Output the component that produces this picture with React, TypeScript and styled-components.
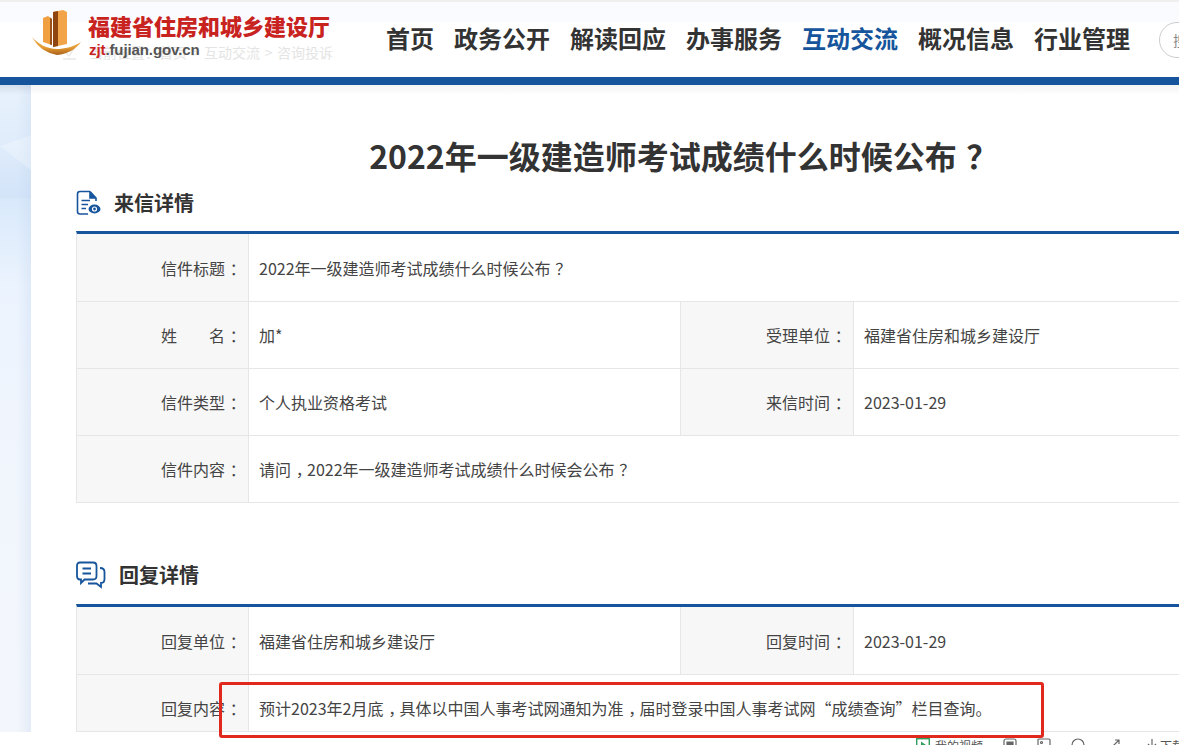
import React from "react";
import styled, { createGlobalStyle } from "styled-components";

const blue = "#16559c";

const GlobalStyle = createGlobalStyle`
  html, body {
    margin: 0;
    padding: 0;
    height: 745px;
    overflow: hidden;
    background: #fff;
    font-family: "Noto Sans CJK SC", "Liberation Sans", sans-serif;
    color: #444;
  }
`;

const Page = styled.div`
  position: relative;
  width: 1179px;
  height: 745px;
  overflow: hidden;
`;

const Header = styled.header`
  position: relative;
  display: flex;
  align-items: flex-start;
  height: 77px;
  box-sizing: border-box;
  padding: 8px 0 0 30px;
  background: linear-gradient(180deg, #fafbfe 0, #fafbfe 22px, #fff 23px);
  box-shadow: inset 0 2px 0 #efefef;
`;

const Logo = styled.div`
  position: relative;
  display: flex;
  gap: 6px;
  width: 356px;
  flex-shrink: 0;
`;

const LogoText = styled.div`
  display: flex;
  flex-direction: column;
  padding-top: 4px;
`;

const LogoName = styled.div`
  font-size: 22px;
  line-height: 26px;
  font-weight: 900;
  color: #c8231f;
  white-space: nowrap;
`;

const LogoUrl = styled.div`
  font-family: "Liberation Sans", sans-serif;
  font-size: 15px;
  line-height: 18px;
  font-weight: 700;
  letter-spacing: -0.1px;
  color: #555;
  white-space: nowrap;
  margin: 3px 0 0 1px;

  b {
    color: #c8231f;
  }
`;

const Nav = styled.nav`
  display: flex;
  gap: 20px;
  padding-top: 12px;
`;

const NavItem = styled.a<{ $active?: boolean }>`
  font-size: 24px;
  line-height: 36px;
  font-weight: 700;
  white-space: nowrap;
  color: ${(p) => (p.$active ? blue : "#333")};
`;

const SearchPill = styled.div`
  position: absolute;
  left: 1159px;
  top: 22px;
  width: 80px;
  height: 36px;
  box-sizing: border-box;
  padding-left: 13px;
  border: 1px solid #ccc;
  border-radius: 18px;
  font-size: 14px;
  line-height: 34px;
  color: #888;
  white-space: nowrap;
  background: #fff;
`;

const GhostCrumb = styled.div`
  position: absolute;
  left: 62px;
  top: 42px;
  display: flex;
  align-items: center;
  gap: 12px;
  font-size: 14px;
  line-height: 20px;
  word-spacing: 1.5px;
  color: #e4e4e4;
  white-space: nowrap;
`;

const BlueBar = styled.div`
  height: 8px;
  background: ${blue};
`;

const Body = styled.div`
  display: flex;
  height: 647px;
`;

const Side = styled.div`
  position: relative;
  width: 31px;
  flex-shrink: 0;
  background:
    linear-gradient(180deg, rgba(170, 185, 205, 0.35) 0, transparent 10px),
    linear-gradient(90deg, transparent 55%, rgba(190, 210, 235, 0.28) 100%),
    linear-gradient(
      180deg,
      #e9f2fd 0,
      #dfecfb 60px,
      #d3e4f9 112px,
      #d9e9fb 114px,
      #ebf3fe 200px,
      #f0f5fd 330px,
      #f3f6fc 646px
    );

  &::before {
    content: "";
    position: absolute;
    left: 0;
    top: 50px;
    width: 31px;
    height: 35px;
    background: rgba(255, 255, 255, 0.25);
    clip-path: polygon(0 32%, 100% 0, 100% 100%);
  }
`;

const Main = styled.main`
  flex-shrink: 0;
  width: 1251px;
  box-sizing: border-box;
  padding: 47px 0 0 45px;
  background: linear-gradient(180deg, #f4f4f4 0, #fff 10px);
`;

const Title = styled.h1`
  display: flex;
  justify-content: center;
  margin: 0;
  font-size: 32px;
  line-height: 46px;
  font-weight: 700;
  color: #333;
  white-space: nowrap;
`;

const Punc = styled.span`
  display: inline-block;
  margin-left: 0.3em;
  margin-right: -0.3em;
`;

const Section = styled.section<{ $gap: number }>`
  margin-top: ${(p) => p.$gap}px;
`;

const SectionHead = styled.div<{ $gap: number; $below: number }>`
  display: flex;
  align-items: center;
  gap: ${(p) => p.$gap}px;
  height: 30px;
  margin-bottom: ${(p) => p.$below}px;
`;

const SectionTitle = styled.h2`
  margin: 0;
  font-size: 20px;
  line-height: 30px;
  font-weight: 700;
  color: #333;
`;

const Grid = styled.div`
  display: grid;
  grid-template-columns: 172px 432px 173px 1fr;
  border-top: 3px solid ${blue};
  border-left: 1px solid #e6e6e6;
`;

const Label = styled.div<{ $h: number; $shift?: number }>`
  display: flex;
  align-items: center;
  justify-content: flex-end;
  height: ${(p) => p.$h}px;
  box-sizing: border-box;
  padding: ${(p) => p.$shift ?? 0}px 7px 0 0;
  background: #f7f7f7;
  border-right: 1px solid #e6e6e6;
  border-bottom: 1px solid #e6e6e6;
  font-size: 16px;
  color: #444;
  white-space: pre;
`;

const Value = styled.div<{ $h: number; $wide?: boolean; $shift?: number }>`
  display: flex;
  align-items: center;
  height: ${(p) => p.$h}px;
  box-sizing: border-box;
  padding: ${(p) => p.$shift ?? 0}px 0 0 10px;
  border-right: 1px solid #e6e6e6;
  border-bottom: 1px solid #e6e6e6;
  font-size: 16px;
  color: #444;
  white-space: pre;
  grid-column: ${(p) => (p.$wide ? "span 3" : "auto")};
`;

const Highlight = styled.div`
  position: absolute;
  left: 219px;
  top: 682px;
  width: 825px;
  height: 56px;
  box-sizing: border-box;
  border: 3px solid #e1281d;
  border-radius: 3px;
  pointer-events: none;
`;

const StatusBar = styled.footer`
  display: flex;
  align-items: flex-start;
  height: 13px;
  padding: 6px 0 0 916px;
  box-sizing: border-box;
  background: #fff;
  overflow: hidden;
`;

const StatusText = styled.span`
  font-size: 12px;
  line-height: 16px;
  color: #555;
  white-space: nowrap;
  margin-right: 20px;
`;

const StatusIcon = styled.svg<{ $gap?: number }>`
  flex-shrink: 0;
  width: 14px;
  height: 14px;
  margin-right: ${(p) => p.$gap ?? 20}px;
`;

const LogoMark = () => (
  <svg width="52" height="48" viewBox="0 0 52 48">
    <defs>
      <linearGradient id="boat" x1="0" y1="0" x2="0" y2="1">
        <stop offset="0" stopColor="#f0b050" />
        <stop offset="0.6" stopColor="#e49a32" />
        <stop offset="1" stopColor="#a8601c" />
      </linearGradient>
    </defs>
    <path d="M13 10 L18 8 L22 11 V37 L13 34Z" fill="#f0a040" />
    <path d="M20 9.5 L22 11 V37 L20 36.4Z" fill="#9c5216" />
    <path d="M23 4 L33 2 L37 4 V36 L23 39Z" fill="#f2a548" />
    <path d="M23 4 L28 3 V38 L23 39Z" fill="#8f4510" />
    <path d="M2 29 C8 40 17 45 27 47 C38 46 46 41 51 34 C43 39 34 41 27 41 C17 41 8 36 2 29Z" fill="url(#boat)" />
  </svg>
);

const LetterIcon = () => (
  <svg width="26" height="26" viewBox="0 0 26 26" fill="none" stroke={blue} strokeWidth="1.6">
    <path d="M14 1.5H4 Q1.5 1.5 1.5 4V21.5 Q1.5 24 4 24H12" />
    <path d="M14 1.5 L20 8 V11" />
    <path d="M14 2 V8 H20" fill={blue} />
    <path d="M5.5 10.5H14 M5.5 14.5H12 M5.5 18.5H10" />
    <ellipse cx="18.5" cy="19" rx="6" ry="4.4" fill={blue} stroke="none" />
    <circle cx="18.5" cy="19" r="2.6" fill="#fff" stroke="none" />
    <circle cx="18.5" cy="19" r="1.4" fill={blue} stroke="none" />
  </svg>
);

const ReplyIcon = () => (
  <svg width="30" height="28" viewBox="0 0 30 28" fill="none" stroke={blue} strokeWidth="1.8">
    <path d="M4 1.5H17 Q20.5 1.5 20.5 5V15 Q20.5 18.5 17 18.5H8.5 L5 22 V18.5 H4 Q1 18.5 1 15V5 Q1 1.5 4 1.5Z" />
    <path d="M6.5 7.5H15 M6.5 12.5H15" />
    <path d="M24 7 Q28.5 7 28.5 11V18 Q28.5 22 25 22 V26 L20.5 22.5 H12" />
  </svg>
);

const CheckIcon = () => (
  <svg width="15" height="15" viewBox="0 0 15 15" fill="none" stroke="#e8e8e8" strokeWidth="1.4">
    <path d="M1 14H14 M3 7 L7 11 L13 2" />
  </svg>
);

const navItems = ["首页", "政务公开", "解读回应", "办事服务", "互动交流", "概况信息", "行业管理"];

const Colon = () => <Punc>：</Punc>;

const App = () => (
  <Page>
    <GlobalStyle />
    <Header>
      <GhostCrumb>
        <CheckIcon />
        <span>当前位置：首页 &gt; 互动交流 &gt; 咨询投诉</span>
      </GhostCrumb>
      <Logo>
        <LogoMark />
        <LogoText>
          <LogoName>福建省住房和城乡建设厅</LogoName>
          <LogoUrl>
            <b>zjt</b>.fujian.gov.cn
          </LogoUrl>
        </LogoText>
      </Logo>
      <Nav>
        {navItems.map((item) => (
          <NavItem key={item} $active={item === "互动交流"}>
            {item}
          </NavItem>
        ))}
      </Nav>
      <SearchPill>搜索</SearchPill>
    </Header>
    <BlueBar />
    <Body>
      <Side />
      <Main>
        <Title>
          2022年一级建造师考试成绩什么时候公布<Punc>？</Punc>
        </Title>
        <Section $gap={10}>
          <SectionHead $gap={12} $below={13}>
            <LetterIcon />
            <SectionTitle>来信详情</SectionTitle>
          </SectionHead>
          <Grid>
            <Label $h={68}>信件标题<Colon /></Label>
            <Value $h={68} $wide>2022年一级建造师考试成绩什么时候公布<Punc>？</Punc></Value>
            <Label $h={67}>姓　　名<Colon /></Label>
            <Value $h={67}>加*</Value>
            <Label $h={67}>受理单位<Colon /></Label>
            <Value $h={67}>福建省住房和城乡建设厅</Value>
            <Label $h={67}>信件类型<Colon /></Label>
            <Value $h={67}>个人执业资格考试</Value>
            <Label $h={67}>来信时间<Colon /></Label>
            <Value $h={67}>2023-01-29</Value>
            <Label $h={67}>信件内容<Colon /></Label>
            <Value $h={67} $wide>请问<Punc>，</Punc>2022年一级建造师考试成绩什么时候会公布<Punc>？</Punc></Value>
          </Grid>
        </Section>
        <Section $gap={57}>
          <SectionHead $gap={13} $below={14}>
            <ReplyIcon />
            <SectionTitle>回复详情</SectionTitle>
          </SectionHead>
          <Grid>
            <Label $h={68}>回复单位<Colon /></Label>
            <Value $h={68}>福建省住房和城乡建设厅</Value>
            <Label $h={68}>回复时间<Colon /></Label>
            <Value $h={68}>2023-01-29</Value>
            <Label $h={57} $shift={9}>回复内容<Colon /></Label>
            <Value $h={57} $wide $shift={9}>
              预计2023年2月底<Punc>，</Punc>具体以中国人事考试网通知为准<Punc>，</Punc>届时登录中国人事考试网“成绩查询”栏目查询。
            </Value>
          </Grid>
        </Section>
      </Main>
    </Body>
    <StatusBar>
      <StatusIcon $gap={5} viewBox="0 0 14 14" fill="none" stroke="#2e9e5b" strokeWidth="1.4">
        <rect x="0.7" y="0.7" width="12.6" height="12.6" />
        <path d="M5 3.5 L10 7 L5 10.5Z" fill="#2e9e5b" stroke="none" />
      </StatusIcon>
      <StatusText>我的视频</StatusText>
      <StatusIcon viewBox="0 0 14 14" fill="none" stroke="#666" strokeWidth="1.2">
        <rect x="1" y="1" width="12" height="12" rx="2" />
        <path d="M4 4H10V7H4Z" fill="#666" />
      </StatusIcon>
      <StatusIcon viewBox="0 0 14 14" fill="none" stroke="#666" strokeWidth="1.2">
        <rect x="1" y="1" width="12" height="12" rx="1" />
        <circle cx="4.5" cy="4.5" r="1" />
      </StatusIcon>
      <StatusIcon $gap={22} viewBox="0 0 14 14" fill="none" stroke="#666" strokeWidth="1.2">
        <circle cx="7" cy="7" r="6" />
      </StatusIcon>
      <StatusIcon $gap={24} viewBox="0 0 14 14" fill="none" stroke="#666" strokeWidth="1.2">
        <path d="M2 12 L12 2 M8 2 H12 V6" />
      </StatusIcon>
      <StatusIcon $gap={1} viewBox="0 0 14 14" fill="none" stroke="#666" strokeWidth="1.2">
        <path d="M7 1 V9 M3 6 L7 10 L11 6" />
      </StatusIcon>
      <StatusText>下载</StatusText>
    </StatusBar>
    <Highlight />
  </Page>
);

export default App;
